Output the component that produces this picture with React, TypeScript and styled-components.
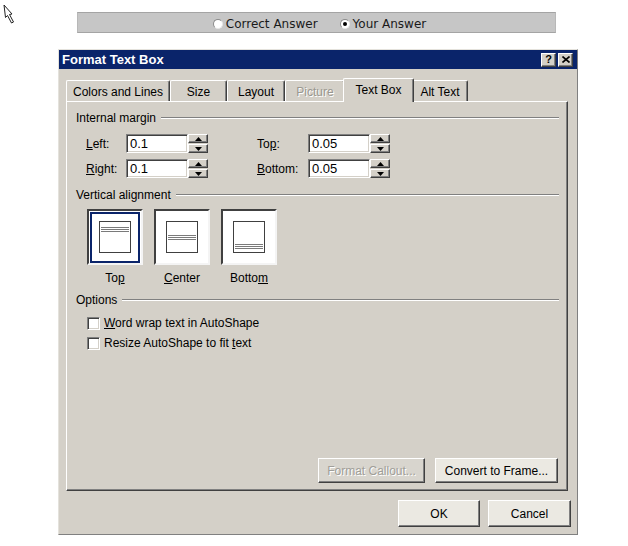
import React from "react";
import styled, { createGlobalStyle, css } from "styled-components";

const GlobalStyle = createGlobalStyle`
  html, body {
    margin: 0;
    padding: 0;
    background: #ffffff;
  }
  body {
    font-family: "Liberation Sans", Arial, sans-serif;
    font-size: 12px;
    color: #000000;
  }
`;

const tabs = [
  { label: "Colors and Lines", width: 104 },
  { label: "Size", width: 57 },
  { label: "Layout", width: 58 },
  { label: "Picture", width: 60, disabled: true },
  { label: "Text Box", width: 67, selected: true },
  { label: "Alt Text", width: 56 },
];

const App = () => {
  return (
    <Page>
      <GlobalStyle />
      <Cursor width="16" height="24" viewBox="0 0 16 24">
        <path
          d="M3 4 L11 13 L8.5 13.5 L12.5 21 L10.5 22 L6.5 14.5 L4.5 16.5 Z"
          fill="#ffffff"
          stroke="#222"
          strokeWidth="1"
          strokeLinejoin="round"
        />
      </Cursor>

      <AnswerBar>
        <AnswerOption>
          <Radio />
          Correct Answer
        </AnswerOption>
        <AnswerOption>
          <Radio checked />
          Your Answer
        </AnswerOption>
      </AnswerBar>

      <Dialog>
        <TitleBar>
          <TitleText>Format Text Box</TitleText>
          <TitleButtons>
            <TitleButton>?</TitleButton>
            <TitleButton>
              <svg width="8" height="7" viewBox="0 0 8 7">
                <path d="M0.5 0.5 L7.5 6.5 M7.5 0.5 L0.5 6.5" stroke="#000" strokeWidth="1.6" />
              </svg>
            </TitleButton>
          </TitleButtons>
        </TitleBar>

        <TabStrip>
          {tabs.map(tab => (
            <Tab key={tab.label} $width={tab.width} $selected={!!tab.selected} $disabled={!!tab.disabled}>
              {tab.label}
            </Tab>
          ))}
        </TabStrip>

        <Panel>
          <GroupHeader>Internal margin</GroupHeader>
          <MarginGrid>
            <span>
              <u>L</u>eft:
            </span>
            <SpinField value="0.1" />
            <span>
              To<u>p</u>:
            </span>
            <SpinField value="0.05" />
            <span>
              <u>R</u>ight:
            </span>
            <SpinField value="0.1" />
            <span>
              <u>B</u>ottom:
            </span>
            <SpinField value="0.05" />
          </MarginGrid>

          <GroupHeader $gap={10}>Vertical alignment</GroupHeader>
          <AlignRow>
            <AlignOption>
              <AlignBox>
                <AlignIcon lines={16} selected />
              </AlignBox>
              <AlignLabel>
                To<u>p</u>
              </AlignLabel>
            </AlignOption>
            <AlignOption>
              <AlignBox>
                <AlignIcon lines={24} />
              </AlignBox>
              <AlignLabel>
                <u>C</u>enter
              </AlignLabel>
            </AlignOption>
            <AlignOption>
              <AlignBox>
                <AlignIcon lines={33} />
              </AlignBox>
              <AlignLabel>
                Botto<u>m</u>
              </AlignLabel>
            </AlignOption>
          </AlignRow>

          <GroupHeader $gap={8}>Options</GroupHeader>
          <CheckList>
            <CheckRow>
              <CheckBox />
              <span>
                <u>W</u>ord wrap text in AutoShape
              </span>
            </CheckRow>
            <CheckRow>
              <CheckBox />
              <span>
                Resize AutoShape to fit <u>t</u>ext
              </span>
            </CheckRow>
          </CheckList>

          <PanelButtons>
            <Button $width={107} $height={25} disabled>
              Format Callout...
            </Button>
            <Button $width={123} $height={25}>
              Convert to Frame...
            </Button>
          </PanelButtons>
        </Panel>

        <Footer>
          <Button $width={82} $height={27}>
            OK
          </Button>
          <Button $width={83} $height={27}>
            Cancel
          </Button>
        </Footer>
      </Dialog>
    </Page>
  );
};

const SpinField = ({ value }: { value: string }) => (
  <SpinWrap>
    <TextInput>{value}</TextInput>
    <Spinner>
      <SpinButton>
        <svg width="7" height="4" viewBox="0 0 7 4">
          <path d="M3.5 0 L7 4 L0 4 Z" fill="#000" />
        </svg>
      </SpinButton>
      <SpinButton>
        <svg width="7" height="4" viewBox="0 0 7 4">
          <path d="M0 0 L7 0 L3.5 4 Z" fill="#000" />
        </svg>
      </SpinButton>
    </Spinner>
  </SpinWrap>
);

const AlignIcon = ({ lines, selected }: { lines: number; selected?: boolean }) => (
  <svg width="52" height="52" viewBox="0 0 52 52">
    {selected && <rect x="2" y="2" width="48" height="49" fill="none" stroke="#0a246a" strokeWidth="2" />}
    <rect x="10.5" y="10.5" width="31" height="31" fill="#ffffff" stroke="#404040" strokeWidth="1" />
    {[0, 2, 4].map(offset => (
      <line
        key={offset}
        x1="12"
        x2="40"
        y1={lines + offset + 0.5}
        y2={lines + offset + 0.5}
        stroke="#7a7a7a"
        strokeWidth="1"
      />
    ))}
  </svg>
);

const raised = css`
  border: 1px solid;
  border-color: #ffffff #404040 #404040 #ffffff;
  box-shadow: inset -1px -1px 0 #808080;
`;

const sunken = css`
  border: 1px solid;
  border-color: #808080 #ffffff #ffffff #808080;
  box-shadow: inset 1px 1px 0 #404040, inset -1px -1px 0 #d4d0c8;
`;

const Page = styled.div`
  position: relative;
  width: 628px;
  height: 546px;
  padding-top: 12px;
  box-sizing: border-box;
  overflow: hidden;
`;

const Cursor = styled.svg`
  position: absolute;
  left: 1px;
  top: 1px;
`;

const AnswerBar = styled.div`
  margin-left: 77px;
  width: 479px;
  height: 21px;
  box-sizing: border-box;
  background: #c6c6c6;
  border: 1px solid;
  border-color: #a4a4a4 #b8b8b8 #a4a4a4 #b8b8b8;
  display: flex;
  align-items: center;
  justify-content: center;
  gap: 22px;
  padding: 2px 0 0 6px;
  font-family: "DejaVu Sans", Verdana, sans-serif;
  font-size: 12px;
  color: #1a1a1a;
`;

const AnswerOption = styled.label`
  display: flex;
  align-items: center;
  gap: 3px;
`;

const Radio = styled.span<{ checked?: boolean }>`
  width: 10px;
  height: 10px;
  border-radius: 50%;
  box-sizing: border-box;
  background: #ffffff;
  border: 1px solid;
  border-color: #8a8a8a #e8e8e8 #e8e8e8 #8a8a8a;
  display: flex;
  align-items: center;
  justify-content: center;

  &::after {
    content: "";
    width: 4px;
    height: 4px;
    border-radius: 50%;
    background: ${({ checked }) => (checked ? "#000000" : "transparent")};
  }
`;

const Dialog = styled.div`
  margin: 16px 0 0 58px;
  width: 520px;
  height: 486px;
  box-sizing: border-box;
  background: #d4d0c8;
  border: 1px solid;
  border-color: #e4e2dc #808080 #808080 #e4e2dc;
  display: flex;
  flex-direction: column;
`;

const TitleBar = styled.div`
  height: 19px;
  background: #0a246a;
  display: flex;
  align-items: center;
  justify-content: space-between;
  padding: 0 4px 0 3px;
`;

const TitleText = styled.div`
  color: #ffffff;
  font-weight: bold;
  font-size: 13px;
`;

const TitleButtons = styled.div`
  display: flex;
  gap: 2px;
`;

const TitleButton = styled.div`
  width: 15px;
  height: 14px;
  box-sizing: border-box;
  background: #d4d0c8;
  ${raised};
  display: flex;
  align-items: center;
  justify-content: center;
  font-weight: bold;
  font-size: 11px;
  line-height: 1;
`;

const TabStrip = styled.div`
  margin: 9px 0 0 7px;
  height: 23px;
  display: flex;
  align-items: flex-end;
`;

const Tab = styled.div<{ $width: number; $selected: boolean; $disabled: boolean }>`
  position: relative;
  box-sizing: border-box;
  width: ${({ $width, $selected }) => ($selected ? $width + 4 : $width)}px;
  height: ${({ $selected }) => ($selected ? 24 : 21)}px;
  margin: ${({ $selected }) => ($selected ? "0 -2px -1px -2px" : "0")};
  z-index: ${({ $selected }) => ($selected ? 1 : 0)};
  background: #d4d0c8;
  border-top: 1px solid #ffffff;
  border-left: 1px solid #ffffff;
  border-right: 1px solid #404040;
  border-radius: 2px 2px 0 0;
  box-shadow: inset -1px 0 0 #808080;
  display: flex;
  align-items: center;
  justify-content: center;
  padding: ${({ $selected }) => ($selected ? "0 0 1px" : "2px 0 0")};
  color: ${({ $disabled }) => ($disabled ? "#9a9890" : "#000000")};
  text-shadow: ${({ $disabled }) => ($disabled ? "1px 1px 0 #ffffff" : "none")};
  white-space: nowrap;
`;

const Panel = styled.div`
  margin-left: 7px;
  width: 502px;
  height: 390px;
  box-sizing: border-box;
  border: 1px solid;
  border-color: #ffffff #404040 #404040 #ffffff;
  box-shadow: inset -1px -1px 0 #808080;
  padding: 9px 0 7px 9px;
  display: flex;
  flex-direction: column;
`;

const GroupHeader = styled.div<{ $gap?: number }>`
  margin-top: ${({ $gap }) => $gap ?? 0}px;
  margin-right: 8px;
  height: 14px;
  display: flex;
  align-items: center;
  gap: 5px;
  white-space: nowrap;

  &::after {
    content: "";
    flex: 1;
    border-top: 1px solid #808080;
    border-bottom: 1px solid #ffffff;
  }
`;

const MarginGrid = styled.div`
  margin: 9px 0 0 10px;
  display: grid;
  grid-template-columns: 40px 131px 51px 82px;
  grid-auto-rows: 19px;
  row-gap: 6px;
  align-items: center;
`;

const SpinWrap = styled.div`
  display: flex;
  height: 19px;
`;

const TextInput = styled.div`
  width: 62px;
  height: 19px;
  box-sizing: border-box;
  background: #ffffff;
  ${sunken};
  padding: 2px 0 0 3px;
  font-size: 13px;
  line-height: 14px;
`;

const Spinner = styled.div`
  width: 20px;
  height: 19px;
  display: flex;
  flex-direction: column;
  gap: 1px;
`;

const SpinButton = styled.div`
  flex: 1;
  box-sizing: border-box;
  background: #d4d0c8;
  ${raised};
  display: flex;
  align-items: center;
  justify-content: center;
`;

const AlignRow = styled.div`
  margin: 7px 0 0 11px;
  display: flex;
  gap: 11px;
`;

const AlignOption = styled.div`
  width: 56px;
  display: flex;
  flex-direction: column;
  align-items: center;
  gap: 6px;
`;

const AlignBox = styled.div`
  width: 56px;
  height: 56px;
  box-sizing: border-box;
  background: #ffffff;
  border: 2px solid;
  border-color: #404040 #f4f4f4 #f4f4f4 #404040;
  display: flex;
  align-items: center;
  justify-content: center;
`;

const AlignLabel = styled.div`
  height: 14px;
  line-height: 14px;
`;

const CheckList = styled.div`
  margin: 6px 0 0 11px;
  display: flex;
  flex-direction: column;
`;

const CheckRow = styled.label`
  height: 20px;
  display: flex;
  align-items: center;
  gap: 4px;
`;

const CheckBox = styled.span`
  width: 13px;
  height: 13px;
  box-sizing: border-box;
  background: #ffffff;
  ${sunken};
`;

const PanelButtons = styled.div`
  margin-top: auto;
  padding-right: 9px;
  display: flex;
  justify-content: flex-end;
  gap: 10px;
`;

const Button = styled.button<{ $width: number; $height: number }>`
  width: ${({ $width }) => $width}px;
  height: ${({ $height }) => $height}px;
  box-sizing: border-box;
  background: #ebe9e2;
  ${raised};
  font-family: "Liberation Sans", Arial, sans-serif;
  font-size: 12px;
  color: #000000;
  padding: 0;

  &:disabled {
    background: #d8d5ce;
    color: #a09e98;
    text-shadow: 1px 1px 0 #ffffff;
  }
`;

const Footer = styled.div`
  margin-top: 9px;
  padding-right: 6px;
  display: flex;
  justify-content: flex-end;
  gap: 8px;
`;

export default App;
